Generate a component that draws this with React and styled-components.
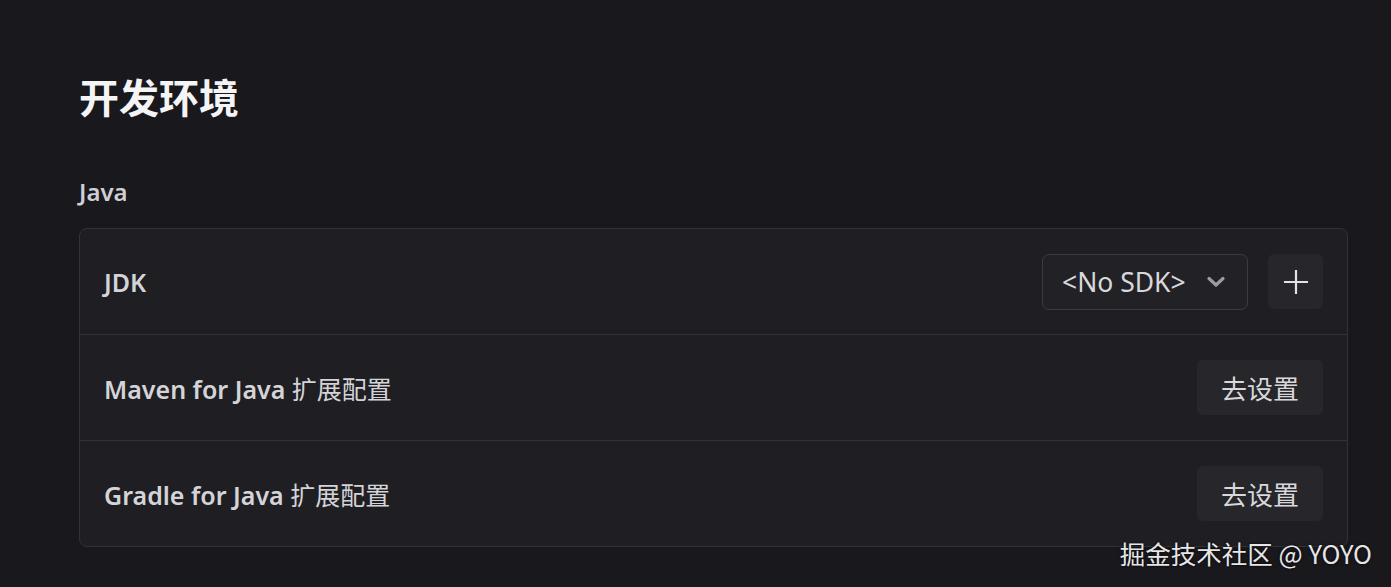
import React from 'react';
import styled, { createGlobalStyle } from 'styled-components';

const Global = createGlobalStyle`
  html, body {
    margin: 0;
    background: #19181c;
  }
  body {
    font-family: "Noto Sans", "Noto Sans CJK SC", sans-serif;
    color: #d6d6da;
  }
`;

const Page = styled.main`
  position: relative;
  height: 587px;
  padding: 70px 43px 0 79px;
  box-sizing: border-box;
  overflow: hidden;
`;

const Title = styled.h1`
  margin: 0;
  font-family: "Noto Sans CJK SC", sans-serif;
  font-size: 40px;
  font-weight: 700;
  line-height: 52px;
  color: #f4f4f6;
`;

const Section = styled.h2`
  margin: 53px 0 19px;
  font-family: "Noto Sans", "Noto Sans CJK SC", sans-serif;
  font-size: 24px;
  font-weight: 600;
  line-height: 34px;
  color: #cfcfd4;
`;

const Card = styled.section`
  background: #1f1f23;
  border: 1px solid #323237;
  border-radius: 8px;
  overflow: hidden;
`;

const Row = styled.div`
  display: flex;
  align-items: center;
  justify-content: space-between;
  height: 105px;
  padding: 0 24px;
  & + & {
    border-top: 1px solid #323237;
  }
`;

const Label = styled.span`
  font-size: 25px;
  font-weight: 600;
  color: #d4d4d8;
`;

const Cjk = styled.span`
  font-family: "Noto Sans CJK SC", sans-serif;
  font-weight: 400;
`;

const Actions = styled.div`
  display: flex;
  align-items: center;
  gap: 20px;
`;

const Select = styled.button`
  display: flex;
  align-items: center;
  justify-content: space-between;
  width: 206px;
  height: 56px;
  padding: 0 22px 0 19px;
  box-sizing: border-box;
  background: #222226;
  border: 1.5px solid #3b3b41;
  border-radius: 7px;
  font-family: "Noto Sans", sans-serif;
  font-size: 26.5px;
  color: #d8d8dc;
`;

const Button = styled.button`
  display: flex;
  align-items: center;
  justify-content: center;
  height: 55px;
  min-width: 55px;
  padding: ${p => (p.$icon ? '0' : '0 24px')};
  box-sizing: border-box;
  background: #26262b;
  border: none;
  border-radius: 6px;
  font-family: "Noto Sans CJK SC", sans-serif;
  font-size: 26px;
  color: #d8d8dc;
`;

const Watermark = styled.div`
  position: absolute;
  right: 19px;
  bottom: 16px;
  font-family: "Noto Sans CJK SC", sans-serif;
  font-size: 25.5px;
  color: #e6e6e8;
  text-shadow: 0 0 3px rgba(0, 0, 0, 0.9);
`;

const Chevron = () => (
  <svg width="18" height="12" viewBox="0 0 18 12">
    <path d="M2 2.5 L9 9 L16 2.5" fill="none" stroke="#9c9ca2" strokeWidth="3.2" strokeLinecap="round" strokeLinejoin="round" />
  </svg>
);

const Plus = () => (
  <svg width="26" height="26" viewBox="0 0 26 26">
    <path d="M13 1 V25 M1 13 H25" stroke="#e2e2e6" strokeWidth="2.2" />
  </svg>
);

export default function App() {
  return (
    <Page>
      <Global />
      <Title>开发环境</Title>
      <Section>Java</Section>
      <Card>
        <Row>
          <Label>JDK</Label>
          <Actions>
            <Select>
              <span>&lt;No SDK&gt;</span>
              <Chevron />
            </Select>
            <Button $icon>
              <Plus />
            </Button>
          </Actions>
        </Row>
        <Row>
          <Label>Maven for Java <Cjk>扩展配置</Cjk></Label>
          <Button>去设置</Button>
        </Row>
        <Row>
          <Label>Gradle for Java <Cjk>扩展配置</Cjk></Label>
          <Button>去设置</Button>
        </Row>
      </Card>
      <Watermark>掘金技术社区 @ YOYO</Watermark>
    </Page>
  );
}
